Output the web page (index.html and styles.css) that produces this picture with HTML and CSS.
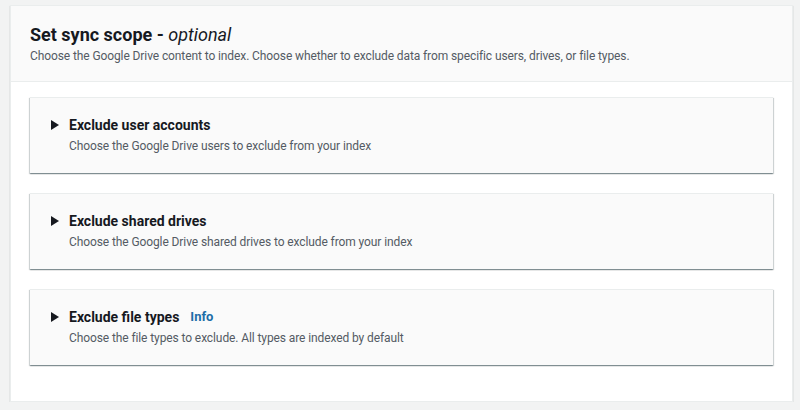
FILE: index.html
```html
<!DOCTYPE html>
<html lang="en">
<head>
    <meta charset="UTF-8">
    <title>Set sync scope</title>
    <link rel="stylesheet" href="styles.css">
</head>
<body>
    <div class="container">
        <div class="header">
            <h2>Set sync scope - <i>optional</i></h2>
            <p class="desc">Choose the Google Drive content to index. Choose whether to exclude data from specific users, drives, or file types.</p>
        </div>
        <div class="content">
            <div class="section">
                <div class="section-title">
                    <span class="caret"></span>
                    <span>Exclude user accounts</span>
                </div>
                <p class="section-desc">Choose the Google Drive users to exclude from your index</p>
            </div>
            <div class="section">
                <div class="section-title">
                    <span class="caret"></span>
                    <span>Exclude shared drives</span>
                </div>
                <p class="section-desc">Choose the Google Drive shared drives to exclude from your index</p>
            </div>
            <div class="section">
                <div class="section-title">
                    <span class="caret"></span>
                    <span>Exclude file types</span>
                    <a class="info" href="#">Info</a>
                </div>
                <p class="section-desc">Choose the file types to exclude. All types are indexed by default</p>
            </div>
        </div>
    </div>
</body>
</html>
```

FILE: styles.css
```css
body {
    font-family: Roboto, "Open Sans", Arial, sans-serif;
    margin: 0;
    padding: 5px 7px 0 10px;
    background-color: #f2f3f3;
    color: #16191f;
}
.container {
    background-color: #fff;
    border: 1px solid #eaeded;
    box-shadow: 0 1px 1px 0 rgba(0, 28, 36, 0.3);
    height: 397px;
    box-sizing: border-box;
}
.header {
    background-color: #fafafa;
    border-bottom: 1px solid #eaeded;
    padding: 18px 20px 0 19px;
    height: 76px;
    box-sizing: border-box;
}
h2 {
    margin: 0;
    font-size: 18px;
    font-weight: bold;
    line-height: 22px;
}
h2 i {
    font-weight: normal;
}
.desc {
    margin: 1px 0 0;
    font-size: 12px;
    letter-spacing: -0.1px;
    line-height: 18px;
    color: #545b64;
}
.content {
    padding: 15px 19px 0;
    display: flex;
    flex-direction: column;
    gap: 20px;
}
.section {
    background-color: #fafafa;
    border-top: 1px solid #eaeded;
    box-shadow: 0 1px 1px 0 rgba(0, 28, 36, 0.3), 1px 1px 1px 0 rgba(0, 28, 36, 0.15), -1px 1px 1px 0 rgba(0, 28, 36, 0.15);
    height: 76px;
    box-sizing: border-box;
    padding: 17px 20px 0 21px;
}
.section-title {
    display: flex;
    align-items: center;
    gap: 10px;
    font-size: 14px;
    font-weight: bold;
    line-height: 20px;
}
.caret {
    width: 0;
    height: 0;
    border-top: 5px solid transparent;
    border-bottom: 5px solid transparent;
    border-left: 8px solid #16191f;
}
.info {
    color: #1e6ea7;
    font-size: 13px;
    text-decoration: none;
    margin-left: 1px;
}
.section-desc {
    margin: 2px 0 0 18px;
    font-size: 12px;
    letter-spacing: -0.1px;
    line-height: 18px;
    color: #545b64;
}
```
